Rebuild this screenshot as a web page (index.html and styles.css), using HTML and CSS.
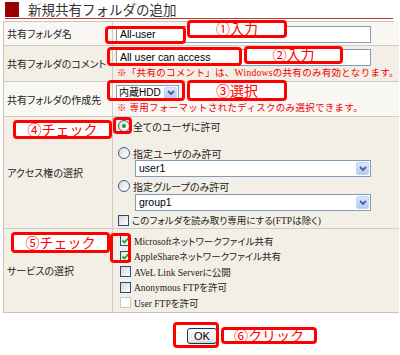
FILE: index.html
```html
<!DOCTYPE html>
<html lang="ja">
<head>
  <meta charset="UTF-8" />
  <title>新規共有フォルダの追加</title>
  <link rel="stylesheet" href="styles.css">
</head>
<body>
  <div class="page">
    <div class="header">
      <span class="header-mark"></span>
      <h1>新規共有フォルダの追加</h1>
    </div>

    <div class="form-grid">
      <div class="cell-label row-light">共有フォルダ名</div>
      <div class="cell-value row-light pad-name">
        <div class="text-field">All-user</div>
      </div>

      <div class="cell-label row-beige">共有フォルダのコメント</div>
      <div class="cell-value row-beige pad-comment">
        <div class="text-field">All user can access</div>
        <div class="note">※「共有のコメント」は、Windowsの共有のみ有効となります。</div>
      </div>

      <div class="cell-label row-light">共有フォルダの作成先</div>
      <div class="cell-value row-light pad-comment">
        <div class="select select-small">
          <span class="select-value">内蔵HDD</span>
          <span class="select-arrow"><svg width="8" height="6" viewBox="0 0 8 6"><polyline points="1,1 4,4 7,1" fill="none" stroke="#4d6185" stroke-width="1.8"/></svg></span>
        </div>
        <div class="note">※ 専用フォーマットされたディスクのみ選択できます。</div>
      </div>

      <div class="cell-label row-beige">アクセス権の選択</div>
      <div class="cell-value row-beige pad-access">
        <div class="choice"><span class="radio is-checked"></span>全てのユーザに許可</div>
        <div class="choice choice-gap"><span class="radio"></span>指定ユーザのみ許可</div>
        <div class="select select-wide">
          <span class="select-value">user1</span>
          <span class="select-arrow"><svg width="8" height="6" viewBox="0 0 8 6"><polyline points="1,1 4,4 7,1" fill="none" stroke="#4d6185" stroke-width="1.8"/></svg></span>
        </div>
        <div class="choice choice-after-select"><span class="radio"></span>指定グループのみ許可</div>
        <div class="select select-wide select-group">
          <span class="select-value">group1</span>
          <span class="select-arrow"><svg width="8" height="6" viewBox="0 0 8 6"><polyline points="1,1 4,4 7,1" fill="none" stroke="#4d6185" stroke-width="1.8"/></svg></span>
        </div>
        <div class="choice choice-after-select serif small"><span class="check"></span>このフォルダを読み取り専用にする(FTPは除く)</div>
      </div>

      <div class="cell-label row-beige last">サービスの選択</div>
      <div class="cell-value row-beige last pad-service">
        <div class="service serif"><span class="check is-checked"><svg width="9" height="9" viewBox="0 0 9 9"><polyline points="1.5,4.5 3.5,6.5 7.5,2" fill="none" stroke="#21a121" stroke-width="1.8"/></svg></span>Microsoftネットワークファイル共有</div>
        <div class="service serif"><span class="check is-checked"><svg width="9" height="9" viewBox="0 0 9 9"><polyline points="1.5,4.5 3.5,6.5 7.5,2" fill="none" stroke="#21a121" stroke-width="1.8"/></svg></span>AppleShareネットワークファイル共有</div>
        <div class="service serif"><span class="check"></span>AVeL Link Serverに公開</div>
        <div class="service serif"><span class="check"></span>Anonymous FTPを許可</div>
        <div class="service serif"><span class="check is-disabled"></span>User FTPを許可</div>
      </div>
    </div>

    <div class="actions">
      <button class="ok-button" type="button">OK</button>
    </div>

    <!-- annotation overlays -->
    <div class="frame" style="left:105px; top:26px; width:81px; height:18px;"></div>
    <div class="tag" style="left:187px; top:20px; width:100px; height:18px;">①入力</div>
    <div class="frame" style="left:107px; top:47px; width:135px; height:19px;"></div>
    <div class="tag" style="left:244px; top:46px; width:99px; height:18px;">②入力</div>
    <div class="frame" style="left:107px; top:80px; width:78px; height:21px;"></div>
    <div class="tag" style="left:187px; top:80px; width:100px; height:21px;">③選択</div>
    <div class="tag" style="left:13px; top:120px; width:99px; height:19px;">④チェック</div>
    <div class="frame" style="left:113px; top:117px; width:19px; height:17px;"></div>
    <div class="tag" style="left:11px; top:232px; width:99px; height:21px;">⑤チェック</div>
    <div class="frame" style="left:110px; top:233px; width:21px; height:30px;"></div>
    <div class="frame" style="left:173px; top:322px; width:46px; height:26px;"></div>
    <div class="tag" style="left:221px; top:327px; width:96px; height:17px;">⑥クリック</div>
  </div>
</body>
</html>
```

FILE: styles.css
```css
* {
  box-sizing: border-box;
}

body {
  margin: 0;
  background: #ffffff;
  font-family: "Noto Sans CJK JP", sans-serif;
  color: #222222;
}

.page {
  position: relative;
  width: 400px;
  height: 355px;
  overflow: hidden;
}

/* Header */
.header {
  display: flex;
  align-items: center;
  height: 19px;
  margin: 0 7px 0 5px;
  border-bottom: 1px solid #c0392b;
}

.header-mark {
  width: 14px;
  height: 15px;
  background: #9b0000;
}

.header h1 {
  margin: 0 0 0 9px;
  font-size: 13.5px;
  font-weight: normal;
  line-height: 18px;
  color: #333333;
}

/* Form table */
.form-grid {
  display: grid;
  grid-template-columns: 109px 1fr;
  grid-template-rows: 24px 36px 35px 112px 84px;
  width: 391px;
  margin: 2px 0 0 3px;
  border: 1px solid #c8c4ba;
  border-bottom: none;
}

.cell-label,
.cell-value {
  border-bottom: 1px solid #d0ccc2;
}

.cell-label {
  display: flex;
  align-items: center;
  padding-left: 3px;
  border-right: 1px solid #d0ccc2;
  font-size: 10px;
  font-feature-settings: "palt";
}

.cell-label.last,
.cell-value.last {
  border-bottom: 1px solid #c8c4ba;
}

.row-light {
  background: #f8f7f4;
}

.row-beige {
  background: #f3efe6;
}

.pad-name {
  padding: 4px 0 0 3px;
}

.pad-comment {
  padding: 3px 0 0 3px;
}

.pad-access {
  padding: 2px 0 0 5px;
}

.pad-service {
  padding: 4px 0 0 6px;
}

.text-field {
  width: 255px;
  height: 17px;
  padding-left: 3px;
  border: 1px solid #7f9db9;
  background: #ffffff;
  font-family: "Liberation Sans", sans-serif;
  font-size: 10.5px;
  line-height: 15px;
  color: #000000;
}

.note {
  margin-top: 1px;
  padding-left: 1px;
  font-family: "Liberation Serif", "Noto Sans CJK JP", serif;
  font-size: 9.5px;
  letter-spacing: 0.3px;
  line-height: 12px;
  color: #ee0000;
  white-space: nowrap;
}

/* Select boxes */
.select {
  display: flex;
  height: 17px;
  border: 1px solid #7f9db9;
  background: #ffffff;
}

.select-small {
  width: 63px;
  height: 16px;
}

.select-small .select-value {
  padding-left: 2px;
  font-size: 10px;
  line-height: 14px;
}

.select-wide {
  width: 236px;
  margin-left: 17px;
}

.select-group {
  margin-top: 1px;
}

.select-value {
  flex: 1;
  padding-left: 3px;
  font-family: "Liberation Sans", "Noto Sans CJK JP", sans-serif;
  font-size: 10.5px;
  line-height: 15px;
  color: #000000;
  white-space: nowrap;
}

.select-arrow {
  display: flex;
  align-items: center;
  justify-content: center;
  flex: none;
  width: 13px;
  margin: 1px;
  border: 1px solid #c3d3fd;
  border-radius: 2px;
  background: linear-gradient(#dbe6fe, #b6caf7);
}

/* Radios and checkboxes */
.choice,
.service {
  display: flex;
  align-items: center;
  gap: 3px;
  height: 14px;
  font-size: 10px;
  font-feature-settings: "palt";
  white-space: nowrap;
}

.service {
  height: 15.5px;
  padding-left: 1px;
  font-size: 9.5px;
}

.serif {
  font-family: "Liberation Serif", "Noto Sans CJK JP", serif;
}

.small {
  font-size: 9.5px;
}

.choice-gap {
  margin-top: 13px;
}

.choice-after-select {
  margin-top: 2px;
}

.radio {
  display: inline-flex;
  align-items: center;
  justify-content: center;
  width: 12px;
  height: 12px;
  border: 1px solid #3d5f8c;
  border-radius: 50%;
  background: linear-gradient(135deg, #dcdcd7, #ffffff);
}

.radio.is-checked::after {
  content: "";
  width: 4px;
  height: 4px;
  border-radius: 50%;
  background: #21a121;
}

.check {
  display: inline-flex;
  align-items: center;
  justify-content: center;
  flex: none;
  width: 11px;
  height: 11px;
  border: 1px solid #1c5180;
  background: linear-gradient(135deg, #d6d5cd, #ffffff);
}

.check.is-checked {
  background: linear-gradient(135deg, #e6e5de, #ffffff);
}

.check.is-disabled {
  border-color: #cac8bb;
  background: #ffffff;
}

/* OK button */
.actions {
  display: flex;
  justify-content: center;
  margin-top: 15px;
  padding-left: 4px;
}

.ok-button {
  width: 30px;
  height: 16px;
  padding: 0;
  border: 1px solid #003c74;
  border-radius: 3px;
  background: linear-gradient(#ffffff, #ecebe6 80%, #d6d0c5);
  font-family: "Liberation Sans", sans-serif;
  font-size: 11px;
  color: #000000;
}

/* Annotation overlays */
.frame,
.tag {
  position: absolute;
  border: 3px solid #ff0000;
  border-radius: 4px;
}

.tag {
  display: flex;
  align-items: center;
  justify-content: center;
  padding-bottom: 2px;
  background: #ffffff;
  font-size: 14px;
  line-height: 1;
  color: #ff0000;
  white-space: nowrap;
}
```
